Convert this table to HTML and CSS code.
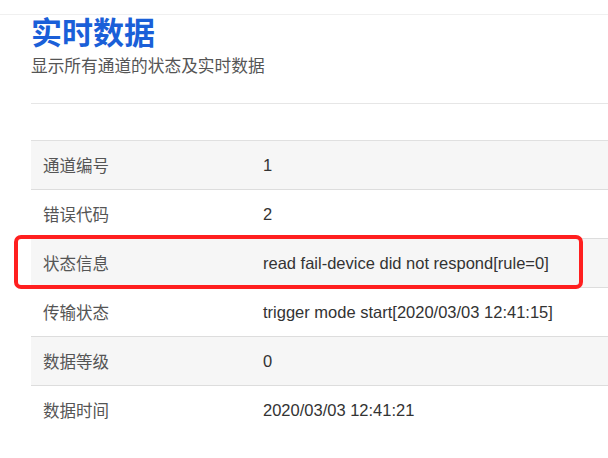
FILE: index.html
```html
<!DOCTYPE html>
<html lang="zh-CN">
<head>
<meta charset="utf-8">
<title>实时数据</title>
<link rel="stylesheet" href="styles.css">
</head>
<body>
<div class="topbar"></div>
<main class="page">
  <h1 class="title">实时数据</h1>
  <p class="subtitle">显示所有通道的状态及实时数据</p>
  <hr class="divider">
  <div class="table-wrap">
    <table class="data">
      <tbody>
        <tr class="odd"><td class="label">通道编号</td><td class="value">1</td></tr>
        <tr><td class="label">错误代码</td><td class="value">2</td></tr>
        <tr class="odd"><td class="label">状态信息</td><td class="value">read fail-device did not respond[rule=0]</td></tr>
        <tr><td class="label">传输状态</td><td class="value">trigger mode start[2020/03/03 12:41:15]</td></tr>
        <tr class="odd"><td class="label">数据等级</td><td class="value">0</td></tr>
        <tr><td class="label">数据时间</td><td class="value">2020/03/03 12:41:21</td></tr>
      </tbody>
    </table>
    <div class="highlight"></div>
  </div>
</main>
</body>
</html>
```
FILE: styles.css
```css
html, body {
  margin: 0;
  padding: 0;
  background: #ffffff;
  font-family: "Liberation Sans", Arial, "Noto Sans CJK SC", sans-serif;
  color: #333;
  overflow: hidden;
}

.topbar {
  height: 14px;
  border-bottom: 1px solid #f0f0f0;
}

.page {
  padding-left: 31px;
}

.title {
  margin: 0;
  font-size: 31px;
  line-height: 31px;
  font-weight: bold;
  color: #1a5fd8;
  font-family: "Noto Sans CJK SC", sans-serif;
}

.subtitle {
  margin: 9px 0 0;
  font-size: 16.7px;
  line-height: 20px;
  color: #555;
  font-family: "Noto Sans CJK SC", sans-serif;
}

.divider {
  margin: 28px 0 0;
  border: 0;
  border-top: 1px solid #e6e6e6;
  height: 0;
}

.table-wrap {
  position: relative;
  margin-top: 36px;
}

.data {
  width: 100%;
  border-collapse: collapse;
  font-size: 16.5px;
}

.data td {
  height: 48px;
  padding: 0 12px;
  border-top: 1px solid #dddddd;
  vertical-align: middle;
}

.data tr:first-child td {
  border-top: 1px solid #e0e0e0;
}

.data tr.odd td {
  background: #f6f6f6;
}

.data .label {
  width: 196px;
  color: #555;
  font-family: "Noto Sans CJK SC", sans-serif;
}

.data .value {
  color: #333;
}

.highlight {
  position: absolute;
  left: -17px;
  top: 95px;
  width: 561px;
  height: 46px;
  border: 4px solid #ff1f1f;
  border-radius: 7px;
  pointer-events: none;
}
```
